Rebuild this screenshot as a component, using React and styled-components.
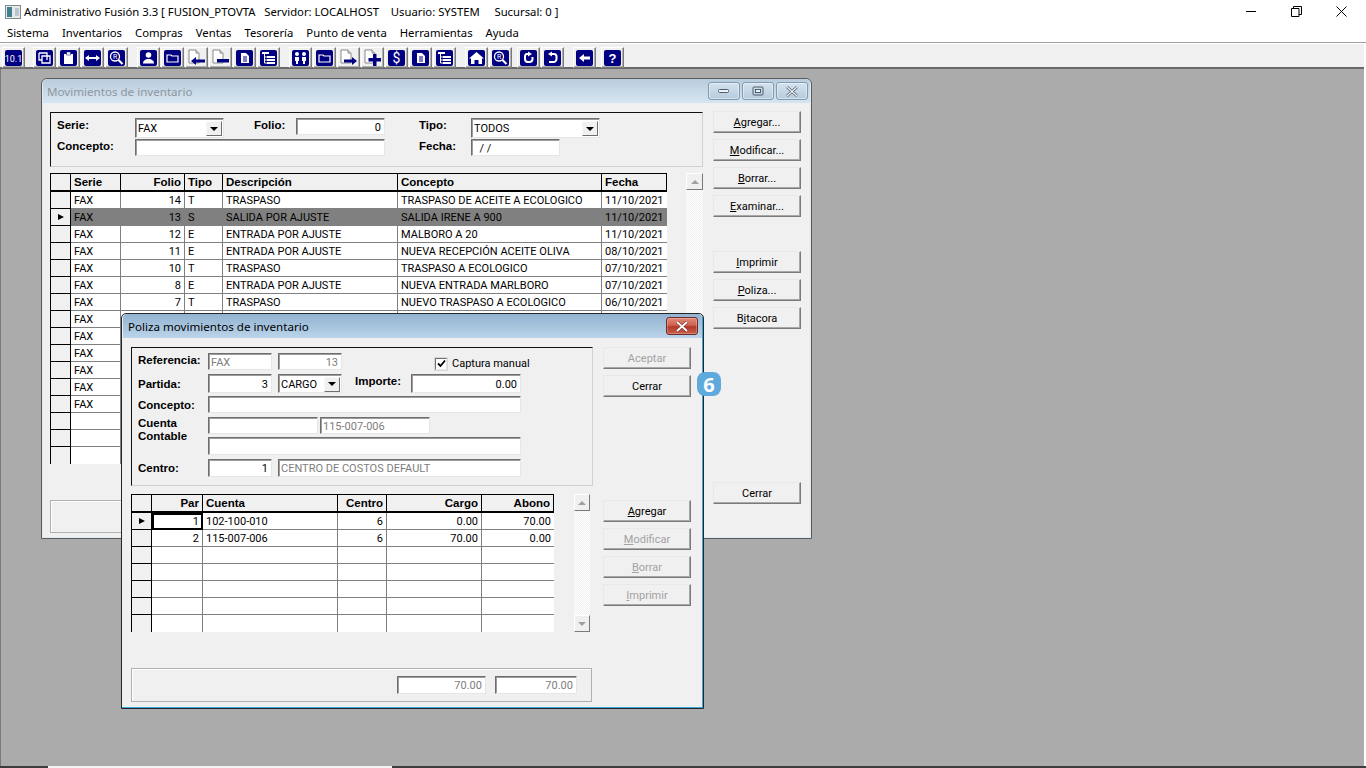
import React from 'react';
import styled, { createGlobalStyle } from 'styled-components';

const GlobalStyle = createGlobalStyle`
  html, body {
    margin: 0;
    padding: 0;
    height: 100%;
    background: #ffffff;
    overflow: hidden;
  }
  * { box-sizing: border-box; }
  #root { height: 100%; }
`;

const UI_FONT = '"Noto Sans", "Open Sans", sans-serif';
const FORM_FONT = 'Roboto, "Liberation Sans", Arial, sans-serif';
const BOLD_FONT = '"Liberation Sans", Arial, sans-serif';

const Screen = styled.div`
  width: 1366px;
  height: 768px;
  display: flex;
  flex-direction: column;
  background: #ffffff;
  font-family: ${FORM_FONT};
  font-size: 11px;
  color: #000000;
`;

const TitleBar = styled.div`
  height: 22px;
  padding: 1px 2px 0 5px;
  display: flex;
  align-items: center;
  font-family: ${UI_FONT};
  font-size: 11.3px;
  white-space: pre;
`;

const AppTitle = styled.span`
  margin-left: 3px;
  flex: 1;
`;

const CaptionButton = styled.div`
  width: 45px;
  height: 20px;
  display: flex;
  align-items: center;
  justify-content: center;
`;

const MenuBar = styled.div`
  height: 21px;
  padding: 0 0 0 7px;
  display: flex;
  align-items: center;
  gap: 13px;
  font-family: ${UI_FONT};
  font-size: 11.3px;
  border-bottom: 1px solid #a0a0a0;
`;

const Toolbar = styled.div`
  width: 1364px;
  height: 26px;
  padding: 3px 0 0 2px;
  display: flex;
  background: #f0f0f0;
  border-top: 1px solid #ffffff;
  border-bottom: 2px solid #6a6a6a;
`;

const ToolGroup = styled.div`
  display: flex;
  gap: 1px;
  margin-left: ${(props) => props.$gap || 0}px;
  margin-right: 1px;
`;

const ToolButton = styled.div`
  width: 23px;
  height: 21px;
  display: flex;
  align-items: center;
  justify-content: center;
  background: #f0f0f0;
  border: 1px solid;
  border-color: #ffffff #7a7a7a #7a7a7a #ffffff;
  box-shadow: inset -1px -1px 0 #b0b0b0;
`;

const Desktop = styled.div`
  position: relative;
  width: 1364px;
  flex: 1;
  background: #ababab;
  border-left: 1px solid #7a7a7a;
`;

const BottomEdge = styled.div`
  height: 2px;
  display: flex;
  background: #3c3c3c;
`;

const BottomGap = styled.div`
  width: 344px;
  margin-left: 48px;
  background: #f4f4f4;
`;

const MainWindow = styled.div`
  position: absolute;
  left: 40px;
  top: 9px;
  width: 771px;
  height: 461px;
  display: flex;
  flex-direction: column;
  border: 1px solid #5a5a5a;
  border-radius: 6px 6px 0 0;
  background: #dfeaf3;
  padding: 0 1px 1px 1px;
`;

const MainCaption = styled.div`
  height: 24px;
  padding: 0 2px 0 4px;
  display: flex;
  align-items: center;
  justify-content: space-between;
  background: linear-gradient(#b9ccdc, #d6e5f2);
  border-radius: 5px 5px 0 0;
  font-family: ${UI_FONT};
  font-size: 11.6px;
  color: #8f979e;
`;

const WindowControls = styled.div`
  display: flex;
  gap: 2px;
`;

const GlassButton = styled.div`
  width: 32px;
  height: 18px;
  display: flex;
  align-items: center;
  justify-content: center;
  border: 1px solid #7f9ab3;
  border-radius: 3px;
  background: linear-gradient(#d4e2ee, #b7cbdd);
  box-shadow: inset 0 0 0 1px rgba(255, 255, 255, 0.45);
`;

const WindowBody = styled.div`
  flex: 1;
  padding: 9px 0 0 7px;
  display: flex;
  gap: 10px;
  background: #f0f0f0;
`;

const LeftColumn = styled.div`
  width: 653px;
  display: flex;
  flex-direction: column;
`;

const ButtonColumn = styled.div`
  width: 88px;
  display: flex;
  flex-direction: column;
  gap: 6px;
  margin-top: ${(props) => props.$top || 0}px;
`;

const Sunken = styled.div`
  border: 1px solid;
  border-color: #101010 #d0d0d0 #d0d0d0 #101010;
`;

const FilterPanel = styled(Sunken)`
  height: 55px;
  padding: 5px 0 0 6px;
  display: grid;
  grid-template-columns: 78px 89px 72px 89px 86px 129px;
  grid-template-rows: 21px 17px;
`;

const Label = styled.div`
  font-family: ${BOLD_FONT};
  font-weight: bold;
  font-size: 11.5px;
  line-height: 14px;
  padding-left: ${(props) => props.$pad || 0}px;
`;

const Field = styled.div`
  width: ${(props) => (props.$w ? `${props.$w}px` : '100%')};
  height: ${(props) => props.$h || 17}px;
  flex-shrink: 0;
  padding: 1px 3px 0 2px;
  display: flex;
  align-items: center;
  justify-content: ${(props) => (props.$right ? 'flex-end' : 'flex-start')};
  grid-column: ${(props) => props.$span || 'auto'};
  background: #ffffff;
  color: ${(props) => (props.$muted ? '#7d7d7d' : '#000000')};
  border: 1px solid;
  border-color: #6e6e6e #e6e6e6 #e6e6e6 #6e6e6e;
  box-shadow: inset 1px 1px 0 #9c9c9c;
  white-space: pre;
  overflow: hidden;
`;

const Combo = styled(Field)`
  padding-right: 1px;
  justify-content: space-between;
`;

const ComboArrow = styled.div`
  width: 16px;
  height: 15px;
  display: flex;
  align-items: center;
  justify-content: center;
  background: #f0f0f0;
  border: 1px solid;
  border-color: #f8f8f8 #6e6e6e #6e6e6e #f8f8f8;

  &::after {
    content: '';
    border-left: 4px solid transparent;
    border-right: 4px solid transparent;
    border-top: 4px solid #000000;
  }
`;

const GridArea = styled.div`
  margin-top: 6px;
  display: flex;
  justify-content: space-between;
`;

const DataGrid = styled.div`
  width: ${(props) => props.$w}px;
`;

const GridRow = styled.div`
  display: grid;
  grid-template-columns: ${(props) => props.$cols};
  height: 17px;
  background: ${(props) => (props.$selected ? '#808080' : '#ffffff')};
`;

const HeadRow = styled(GridRow)`
  height: 19px;
  background: #f0f0f0;
`;

const HeadCell = styled.div`
  padding: 1px 3px 0 3px;
  font-family: ${BOLD_FONT};
  font-weight: bold;
  font-size: 11.5px;
  line-height: 14px;
  text-align: ${(props) => (props.$right ? 'right' : 'left')};
  border-top: 1px solid #000000;
  border-right: 1px solid #000000;
  border-bottom: 2px solid #000000;
`;

const Indicator = styled.div`
  display: flex;
  align-items: center;
  justify-content: center;
  background: #f0f0f0;
  border-left: 1px solid #000000;
  border-right: 1px solid #000000;
  border-bottom: 1px solid #000000;
  ${GridRow}:last-child & {
    border-bottom: none;
  }
`;

const HeadIndicator = styled(HeadCell)`
  border-left: 1px solid #000000;
  padding: 0;
`;

const Cell = styled.div`
  padding: 1px 3px 0;
  line-height: 15px;
  text-align: ${(props) => (props.$right ? 'right' : 'left')};
  white-space: nowrap;
  overflow: hidden;
  border-right: 1px solid #808080;
  border-bottom: 1px solid #808080;
  outline: ${(props) => (props.$focus ? '2px solid #000000' : 'none')};
  outline-offset: -2px;

  &:last-child {
    border-right: none;
  }
  ${GridRow}:last-child & {
    border-bottom: none;
  }
`;

const Marker = styled.span`
  border-top: 3px solid transparent;
  border-bottom: 3px solid transparent;
  border-left: 6px solid #000000;
`;

const ScrollBar = styled.div`
  width: ${(props) => props.$w}px;
  height: ${(props) => props.$h}px;
  display: flex;
  flex-direction: column;
  justify-content: space-between;
  background: repeating-conic-gradient(#f0f0f0 0 25%, #ffffff 0 50%) 0 0 / 2px 2px;
`;

const ScrollButton = styled.div`
  height: 17px;
  display: flex;
  align-items: center;
  justify-content: center;
  background: #f0f0f0;
  border: 1px solid;
  border-color: #ffffff #7a7a7a #7a7a7a #ffffff;

  &::after {
    content: '';
    border-left: 4px solid transparent;
    border-right: 4px solid transparent;
    ${(props) => (props.$down ? 'border-top' : 'border-bottom')}: 4px solid #a0a0a0;
  }
`;

const FormButton = styled.div`
  width: 88px;
  height: 22px;
  display: flex;
  align-items: center;
  justify-content: center;
  color: ${(props) => (props.$disabled ? '#a2a2a2' : '#000000')};
  background: #f0f0f0;
  border: 1px solid;
  border-color: #e8e8e8 #7a7a7a #7a7a7a #e8e8e8;
  box-shadow: inset -1px -1px 0 #a8a8a8;
`;

const ButtonStack = styled.div`
  margin-top: -1px;
`;

const Spacer = styled.div`
  height: ${(props) => props.$h}px;
`;

const StatusPanel = styled.div`
  width: ${(props) => props.$w}px;
  height: ${(props) => props.$h}px;
  margin-top: ${(props) => props.$top}px;
  display: flex;
  align-items: center;
  justify-content: flex-end;
  gap: 9px;
  padding-right: 14px;
  border: 1px solid #b0b0b0;
  box-shadow: inset 1px 1px 0 #ffffff;
`;

const Dialog = styled.div`
  position: absolute;
  left: 120px;
  top: 244px;
  width: 583px;
  height: 396px;
  display: flex;
  flex-direction: column;
  border: 1px solid #262626;
  border-radius: 5px 5px 0 0;
  background: #f0f0f0;
  padding: 0 1px 1px 1px;
  box-shadow: inset -1px -1px 0 #38a8dc;
`;

const DialogCaption = styled.div`
  height: 24px;
  flex-shrink: 0;
  padding: 0 4px 0 5px;
  display: flex;
  align-items: center;
  justify-content: space-between;
  background: linear-gradient(#93b3d1, #bad4ea);
  border-radius: 4px 4px 0 0;
  font-family: ${UI_FONT};
  font-size: 11.6px;
`;

const CloseButton = styled.div`
  width: 32px;
  height: 18px;
  display: flex;
  align-items: center;
  justify-content: center;
  border: 1px solid #6e2a24;
  border-radius: 3px;
  background: linear-gradient(#e0897a 0, #d0614f 45%, #b23a28 55%, #c7604c 100%);
  box-shadow: inset 0 0 0 1px rgba(255, 255, 255, 0.25);
`;

const DialogBody = styled.div`
  flex: 1;
  padding: 9px 0 0 8px;
  display: flex;
  flex-direction: column;
  background: #f0f0f0;
`;

const DialogTop = styled.div`
  display: flex;
  gap: 10px;
`;

const DialogMiddle = styled.div`
  margin-top: 8px;
  display: flex;
  gap: 13px;
`;

const GridWithBar = styled.div`
  width: 459px;
  display: flex;
  justify-content: space-between;
`;

const PolicyPanel = styled(Sunken)`
  width: 462px;
  height: 139px;
  padding: 5px 0 0 6px;
  display: grid;
  grid-template-columns: 70px 313px;
  grid-template-rows: 21px 22px 21px 20px 22px 18px;
`;

const FormRow = styled.div`
  display: flex;
  gap: ${(props) => props.$gap || 6}px;
  align-items: flex-start;
`;

const TwoRows = styled.div`
  grid-row: span 2;
  font-family: ${BOLD_FONT};
  font-weight: bold;
  font-size: 11.5px;
  line-height: 13px;
`;

const RowLabel = styled(Label)`
  padding-top: ${(props) => props.$top || 0}px;
`;

const InlineLabel = styled(Label)`
  width: 50px;
  flex-shrink: 0;
  margin-left: 7px;
`;

const CheckWrap = styled.div`
  margin-left: 87px;
  padding-top: 4px;
  display: flex;
  align-items: center;
  gap: 5px;
  font-size: 11px;
  white-space: nowrap;
`;

const CheckBox = styled.div`
  width: 12px;
  height: 12px;
  display: flex;
  align-items: center;
  justify-content: center;
  background: #ffffff;
  border: 1px solid;
  border-color: #6e6e6e #e6e6e6 #e6e6e6 #6e6e6e;
  box-shadow: 0 0 0 1px #d8d8d8;
`;

const Badge = styled.div`
  position: absolute;
  left: 575px;
  top: 58px;
  width: 24px;
  height: 24px;
  display: flex;
  align-items: center;
  justify-content: center;
  border-radius: 8px;
  background: #5eaadd;
  color: #ffffff;
  font-family: ${UI_FONT};
  font-weight: 700;
  font-size: 20px;
`;

const NAVY = '#000080';

const Tile = ({ children }) => (
  <svg width="17" height="16" viewBox="0 0 17 16">
    <rect width="17" height="16" rx="2" fill={NAVY} />
    {children}
  </svg>
);

const Page = ({ children }) => (
  <svg width="19" height="17" viewBox="0 0 19 17">
    <path d="M2 1h7l3 3v10H2z" fill="#ffffff" stroke="#8a8a8a" strokeWidth="1" />
    <path d="M9 1v3h3" fill="#e0e0e0" stroke="#8a8a8a" strokeWidth="1" />
    {children}
  </svg>
);

const DocIcon = () => (
  <Tile>
    <path d="M5 3h5l3 3v7H5z" fill="#fff" />
    <path d="M7 7h4M7 9h4M7 11h4" stroke={NAVY} strokeWidth="1" />
  </Tile>
);

const TreeIcon = () => (
  <Tile>
    <path d="M2 2h7v2H2zM7 6h8v2H7zM7 9h8v2H7zM7 12h8v2H7z" fill="#fff" />
    <path d="M4.500 4v9H7M4.500 7H7M4.500 10H7" stroke="#fff" fill="none" />
  </Tile>
);

const LensIcon = () => (
  <Tile>
    <circle cx="7" cy="6.500" r="4.500" fill="none" stroke="#fff" strokeWidth="1.300" />
    <path d="M10.500 10l4 4" stroke="#fff" strokeWidth="2.200" />
    <text x="5" y="9" fontSize="7" fontFamily={FORM_FONT} fill="#fff">R</text>
  </Tile>
);

const FolderIcon = () => (
  <Tile>
    <path d="M3 5h4l1 1h6v6H3z" fill="none" stroke="#fff" strokeWidth="1.200" />
  </Tile>
);

const TOOL_GROUPS = [
  {
    gap: 0,
    icons: [
      <Tile key="num">
        <text x="8.500" y="11.500" textAnchor="middle" fontSize="9" fontFamily={FORM_FONT} fill="#fff">10.1</text>
      </Tile>,
    ],
  },
  {
    gap: 7,
    icons: [
      <Tile key="copy">
        <path d="M3 3h8v7M6 6h8v7H6zM3 3v7h3" fill="none" stroke="#fff" strokeWidth="1.300" />
      </Tile>,
      <Tile key="clip">
        <path d="M4 4h9v10H4z" fill="#fff" />
        <path d="M6.500 2h4v3h-4z" fill="#fff" stroke={NAVY} strokeWidth=".5" />
      </Tile>,
      <Tile key="swap">
        <path d="M1 8l4-3v2h7V5l4 3-4 3V9H5v2z" fill="#fff" />
      </Tile>,
      <LensIcon key="lens" />,
    ],
  },
  {
    gap: 8,
    icons: [
      <Tile key="user">
        <circle cx="8.500" cy="5" r="2.800" fill="#fff" />
        <path d="M3 13.500c0-3 2.500-4.500 5.500-4.500s5.500 1.500 5.500 4.500z" fill="#fff" />
      </Tile>,
      <FolderIcon key="folder" />,
      <Page key="in">
        <path d="M4 12l5-4v2.500h9v3H9V16z" fill={NAVY} />
      </Page>,
      <Page key="minus">
        <path d="M6 10h12v3.500H6z" fill={NAVY} />
      </Page>,
      <DocIcon key="doc" />,
      <TreeIcon key="tree" />,
    ],
  },
  {
    gap: 8,
    icons: [
      <Tile key="people">
        <circle cx="5" cy="4" r="2" fill="#fff" />
        <circle cx="12" cy="4" r="2" fill="#fff" />
        <path d="M3 7h4v4H6v3H4v-3H3zM10 7h4v4h-1v3h-2v-3h-1z" fill="#fff" />
      </Tile>,
      <FolderIcon key="folder2" />,
      <Page key="out">
        <path d="M18 12l-5-4v2.500H5v3h8V16z" fill={NAVY} />
      </Page>,
      <Page key="plus">
        <path d="M10 5h3.500v4H18v3.500h-4.500V17H10v-4.500H5.500V9H10z" fill={NAVY} />
      </Page>,
      <Tile key="dollar">
        <text x="8.500" y="13" textAnchor="middle" fontSize="14" fontFamily={FORM_FONT} fill="#fff">$</text>
      </Tile>,
      <DocIcon key="doc2" />,
      <TreeIcon key="tree2" />,
    ],
  },
  {
    gap: 8,
    icons: [
      <Tile key="home">
        <path d="M8.500 2L16 8.500h-2V14h-3.500v-4h-4v4H3V8.500H1z" fill="#fff" />
      </Tile>,
      <LensIcon key="lens2" />,
    ],
  },
  {
    gap: 4,
    icons: [
      <Tile key="redo">
        <path d="M9 4H6.500A2.500 2.500 0 0 0 5 6v3.500A3 3 0 0 0 8 12h2a3 3 0 0 0 2.500-3V7" fill="none" stroke="#fff" strokeWidth="2" />
        <path d="M8 1.500L12 4 8 6.500z" fill="#fff" />
      </Tile>,
      <Tile key="undo">
        <path d="M6 4h4a2.500 2.500 0 0 1 2.500 2.500V9A3 3 0 0 1 9.500 12H5" fill="none" stroke="#fff" strokeWidth="2" />
        <path d="M8 1.500L4 4l4 2.500z" fill="#fff" />
      </Tile>,
    ],
  },
  {
    gap: 8,
    icons: [
      <Tile key="back">
        <path d="M3 8l5-4v2.500h6v3H8V12z" fill="#fff" />
      </Tile>,
    ],
  },
  {
    gap: 4,
    icons: [
      <Tile key="help">
        <text x="8.500" y="13" textAnchor="middle" fontSize="13" fontWeight="bold" fontFamily={BOLD_FONT} fill="#fff">?</text>
      </Tile>,
    ],
  },
];

const MAIN_COLS = '21px 50px 64px 38px 175px 204px 65px';
const POLICY_COLS = '21px 51px 135px 49px 95px 72px';

const MOVEMENTS = [
  ['FAX', '14', 'T', 'TRASPASO', 'TRASPASO DE ACEITE A ECOLOGICO', '11/10/2021'],
  ['FAX', '13', 'S', 'SALIDA POR AJUSTE', 'SALIDA IRENE A 900', '11/10/2021'],
  ['FAX', '12', 'E', 'ENTRADA POR AJUSTE', 'MALBORO A 20', '11/10/2021'],
  ['FAX', '11', 'E', 'ENTRADA POR AJUSTE', 'NUEVA RECEPCIÓN ACEITE OLIVA', '08/10/2021'],
  ['FAX', '10', 'T', 'TRASPASO', 'TRASPASO A ECOLOGICO', '07/10/2021'],
  ['FAX', '8', 'E', 'ENTRADA POR AJUSTE', 'NUEVA ENTRADA MARLBORO', '07/10/2021'],
  ['FAX', '7', 'T', 'TRASPASO', 'NUEVO TRASPASO A ECOLOGICO', '06/10/2021'],
  ...Array(6).fill(['FAX', '', '', '', '', '']),
  ...Array(3).fill(['', '', '', '', '', '']),
];

const ENTRIES = [
  ['1', '102-100-010', '6', '0.00', '70.00'],
  ['2', '115-007-006', '6', '70.00', '0.00'],
  ...Array(5).fill(['', '', '', '', '']),
];

const MainGrid = () => (
  <DataGrid $w={617}>
    <HeadRow $cols={MAIN_COLS}>
      <HeadIndicator />
      <HeadCell>Serie</HeadCell>
      <HeadCell $right>Folio</HeadCell>
      <HeadCell>Tipo</HeadCell>
      <HeadCell>Descripción</HeadCell>
      <HeadCell>Concepto</HeadCell>
      <HeadCell>Fecha</HeadCell>
    </HeadRow>
    {MOVEMENTS.map((row, index) => (
      <GridRow key={index} $cols={MAIN_COLS} $selected={index === 1}>
        <Indicator>{index === 1 && <Marker />}</Indicator>
        <Cell>{row[0]}</Cell>
        <Cell $right>{row[1]}</Cell>
        <Cell>{row[2]}</Cell>
        <Cell>{row[3]}</Cell>
        <Cell>{row[4]}</Cell>
        <Cell>{row[5]}</Cell>
      </GridRow>
    ))}
  </DataGrid>
);

const PolicyGrid = () => (
  <DataGrid $w={423}>
    <HeadRow $cols={POLICY_COLS}>
      <HeadIndicator />
      <HeadCell $right>Par</HeadCell>
      <HeadCell>Cuenta</HeadCell>
      <HeadCell $right>Centro</HeadCell>
      <HeadCell $right>Cargo</HeadCell>
      <HeadCell $right>Abono</HeadCell>
    </HeadRow>
    {ENTRIES.map((row, index) => (
      <GridRow key={index} $cols={POLICY_COLS}>
        <Indicator>{index === 0 && <Marker />}</Indicator>
        <Cell $right $focus={index === 0}>{row[0]}</Cell>
        <Cell>{row[1]}</Cell>
        <Cell $right>{row[2]}</Cell>
        <Cell $right>{row[3]}</Cell>
        <Cell $right>{row[4]}</Cell>
      </GridRow>
    ))}
  </DataGrid>
);

const App = () => {
  return (
    <Screen>
      <GlobalStyle />
      <TitleBar>
        <svg width="16" height="14" viewBox="0 0 16 14">
          <rect x="0.500" y="0.500" width="15" height="13" fill="#e8e8e8" stroke="#7d8a92" />
          <rect x="2" y="2" width="5" height="10" fill="#3f7f8f" />
          <rect x="10" y="3" width="4" height="8" fill="#b9c6cf" />
        </svg>
        <AppTitle>Administrativo Fusión 3.3 [ FUSION_PTOVTA   Servidor: LOCALHOST    Usuario: SYSTEM     Sucursal: 0 ]</AppTitle>
        <CaptionButton>
          <svg width="11" height="11" viewBox="0 0 11 11">
            <path d="M0 5.500h10" stroke="#000" />
          </svg>
        </CaptionButton>
        <CaptionButton>
          <svg width="11" height="11" viewBox="0 0 11 11">
            <path d="M.5 2.500h7.500v8H.5zM2.500 2.500V.5h8v8H8" fill="none" stroke="#000" />
          </svg>
        </CaptionButton>
        <CaptionButton>
          <svg width="11" height="11" viewBox="0 0 11 11">
            <path d="M.5.5l10 10M10.500.5l-10 10" stroke="#000" />
          </svg>
        </CaptionButton>
      </TitleBar>
      <MenuBar>
        <span>Sistema</span>
        <span>Inventarios</span>
        <span>Compras</span>
        <span>Ventas</span>
        <span>Tesorería</span>
        <span>Punto de venta</span>
        <span>Herramientas</span>
        <span>Ayuda</span>
      </MenuBar>
      <Toolbar>
        {TOOL_GROUPS.map((group, index) => (
          <ToolGroup key={index} $gap={group.gap}>
            {group.icons.map((icon) => (
              <ToolButton key={icon.key}>{icon}</ToolButton>
            ))}
          </ToolGroup>
        ))}
      </Toolbar>
      <Desktop>
        <MainWindow>
          <MainCaption>
            <span>Movimientos de inventario</span>
            <WindowControls>
              <GlassButton>
                <svg width="12" height="6" viewBox="0 0 12 6">
                  <rect x=".5" y="1.500" width="10" height="3" rx="1" fill="#eef4f9" stroke="#4d5c69" />
                </svg>
              </GlassButton>
              <GlassButton>
                <svg width="12" height="10" viewBox="0 0 12 10">
                  <rect x="1" y="1" width="10" height="8" rx="1" fill="none" stroke="#4d5c69" />
                  <rect x="3.500" y="3.500" width="5" height="3" fill="#eef4f9" stroke="#4d5c69" />
                </svg>
              </GlassButton>
              <GlassButton>
                <svg width="14" height="11" viewBox="0 0 14 11">
                  <path d="M2 1l10 9M12 1L2 10" stroke="#4d5c69" strokeWidth="2.600" />
                  <path d="M2 1l10 9M12 1L2 10" stroke="#eef4f9" strokeWidth="1.200" />
                </svg>
              </GlassButton>
            </WindowControls>
          </MainCaption>
          <WindowBody>
            <LeftColumn>
              <FilterPanel>
                <Label>Serie:</Label>
                <Combo $h={20}>
                  FAX
                  <ComboArrow />
                </Combo>
                <Label $pad={30}>Folio:</Label>
                <Field $right>0</Field>
                <Label $pad={34}>Tipo:</Label>
                <Combo $h={20}>
                  TODOS
                  <ComboArrow />
                </Combo>
                <Label>Concepto:</Label>
                <Field $span="span 3" />
                <Label $pad={34}>Fecha:</Label>
                <Field $w={89}>{'  / /'}</Field>
              </FilterPanel>
              <GridArea>
                <MainGrid />
                <ScrollBar $w={17} $h={291}>
                  <ScrollButton />
                  <ScrollButton $down />
                </ScrollBar>
              </GridArea>
              <StatusPanel $w={653} $h={33} $top={36} />
            </LeftColumn>
            <ButtonStack>
              <ButtonColumn>
                <FormButton><span><u>A</u>gregar...</span></FormButton>
                <FormButton><span><u>M</u>odificar...</span></FormButton>
                <FormButton><span><u>B</u>orrar...</span></FormButton>
                <FormButton><span><u>E</u>xaminar...</span></FormButton>
              </ButtonColumn>
              <ButtonColumn $top={34}>
                <FormButton><span><u>I</u>mprimir</span></FormButton>
                <FormButton><span><u>P</u>oliza...</span></FormButton>
                <FormButton><span>B<u>i</u>tacora</span></FormButton>
              </ButtonColumn>
              <ButtonColumn $top={153}>
                <FormButton>Cerrar</FormButton>
              </ButtonColumn>
            </ButtonStack>
          </WindowBody>
        </MainWindow>

        <Dialog>
          <DialogCaption>
            <span>Poliza movimientos de inventario</span>
            <CloseButton>
              <svg width="14" height="11" viewBox="0 0 14 11">
                <path d="M2 1l10 9M12 1L2 10" stroke="#6e2a24" strokeWidth="3" />
                <path d="M2 1l10 9M12 1L2 10" stroke="#ffffff" strokeWidth="1.800" />
              </svg>
            </CloseButton>
          </DialogCaption>
          <DialogBody>
            <DialogTop>
              <PolicyPanel>
                <RowLabel>Referencia:</RowLabel>
                <FormRow>
                  <Field $w={64} $muted>FAX</Field>
                  <Field $w={64} $right $muted>13</Field>
                  <CheckWrap>
                    <CheckBox>
                      <svg width="9" height="9" viewBox="0 0 9 9">
                        <path d="M1 4.500l2.500 2.500L8 1.500" fill="none" stroke="#000" strokeWidth="1.800" />
                      </svg>
                    </CheckBox>
                    Captura manual
                  </CheckWrap>
                </FormRow>
                <RowLabel $top={3}>Partida:</RowLabel>
                <FormRow>
                  <Field $w={64} $h={19} $right>3</Field>
                  <Combo $w={64} $h={19}>
                    CARGO
                    <ComboArrow />
                  </Combo>
                  <InlineLabel>Importe:</InlineLabel>
                  <Field $w={110} $h={19} $right>0.00</Field>
                </FormRow>
                <RowLabel $top={2}>Concepto:</RowLabel>
                <Field $w={313} />
                <TwoRows>
                  Cuenta
                  <br />
                  Contable
                </TwoRows>
                <FormRow $gap={2}>
                  <Field $w={110} />
                  <Field $w={110} $muted>115-007-006</Field>
                </FormRow>
                <Field $w={313} $h={18} />
                <RowLabel $top={2}>Centro:</RowLabel>
                <FormRow>
                  <Field $w={64} $h={18} $right>1</Field>
                  <Field $w={243} $h={18} $muted>CENTRO DE COSTOS DEFAULT</Field>
                </FormRow>
              </PolicyPanel>
              <ButtonColumn>
                <FormButton $disabled>Aceptar</FormButton>
                <FormButton>Cerrar</FormButton>
              </ButtonColumn>
            </DialogTop>
            <DialogMiddle>
              <GridWithBar>
                <PolicyGrid />
                <ScrollBar $w={16} $h={138}>
                  <ScrollButton />
                  <ScrollButton $down />
                </ScrollBar>
              </GridWithBar>
              <div>
                <Spacer $h={6} />
                <ButtonColumn>
                  <FormButton><span><u>A</u>gregar</span></FormButton>
                  <FormButton $disabled><span><u>M</u>odificar</span></FormButton>
                  <FormButton $disabled><span><u>B</u>orrar</span></FormButton>
                  <FormButton $disabled><span><u>I</u>mprimir</span></FormButton>
                </ButtonColumn>
              </div>
            </DialogMiddle>
            <StatusPanel $w={461} $h={34} $top={36}>
              <Field $w={89} $h={18} $right $muted>70.00</Field>
              <Field $w={82} $h={18} $right $muted>70.00</Field>
            </StatusPanel>
          </DialogBody>
          <Badge>6</Badge>
        </Dialog>
      </Desktop>
      <BottomEdge>
        <BottomGap />
      </BottomEdge>
    </Screen>
  );
};

export default App;
